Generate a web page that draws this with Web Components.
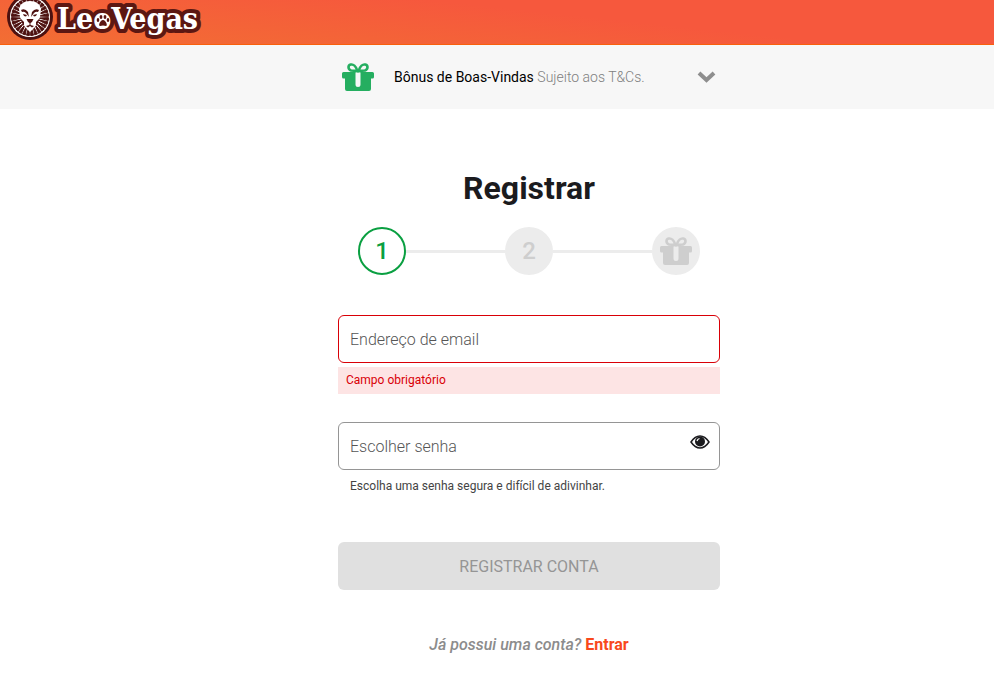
<!DOCTYPE html>
<html lang="pt-BR">
<head>
<meta charset="utf-8">
<meta name="viewport" content="width=device-width, initial-scale=1">
<title>Registrar</title>
<style>
  body {
    margin: 0;
    background: #fff;
    color: #1b1b1e;
    font-family: Roboto, sans-serif;
    --gutter: 64px;
    --column: 382px;
  }
</style>
</head>
<body>
<lv-header></lv-header>
<lv-offer>Bônus de Boas-Vindas<span slot="terms">Sujeito aos T&amp;Cs.</span></lv-offer>
<lv-signup></lv-signup>

<script>
function define(name, html, setup) {
  const template = document.createElement("template");
  template.innerHTML = html.trim();

  window.customElements.define(name, class extends HTMLElement {
    constructor() {
      super();
      this.attachShadow({mode: "open"})
        .appendChild(template.content.cloneNode(true));
    }
    connectedCallback() {
      if (setup) setup(this, this.shadowRoot);
    }
  });
}

// Dark wedges around the lion's face
function mane() {
  let d = "";
  const point = (r, a) => `${(30 + r * Math.cos(a)).toFixed(1)} ${(17 + r * Math.sin(a)).toFixed(1)}`;
  for (let i = 0; i < 28; i++) {
    const a = (i + .5) / 28 * Math.PI * 2;
    d += `M${point(9, a)}L${point(18.5, a - .08)}L${point(18.5, a + .08)}Z`;
  }
  return d;
}

define("lv-gift", `
<style>
  :host { display: block; width: 32px; height: 30px; }
  svg { display: block; width: 100%; height: 100%; }
</style>
<svg viewBox="0 0 32 30" aria-hidden="true">
  <g fill="none" stroke="currentColor" stroke-width="2.6">
    <path d="M15.5 9C14 4 11 2 8.700 2.600C5.500 3.400 6 7.500 9 8.500Z"/>
    <path d="M16.500 9C18 4 21 2 23.300 2.600C26.500 3.400 26 7.500 23 8.500Z"/>
  </g>
  <path fill="currentColor" fill-rule="evenodd" d="M1.500 10H12.500Q13 8 16 8Q19 8 19.500 10H30.500Q32 10 32 11.500V15Q32 16.500 30.500 16.500H29V27Q29 29 27 29H5Q3 29 3 27V16.500H1.500Q0 16.500 0 15V11.500Q0 10 1.500 10ZM13.500 10.500V22.500A2.500 2.500 0 0 0 18.500 22.500V10.500Q16 9 13.500 10.500Z"/>
</svg>
`);

define("lv-header", `
<style>
  :host {
    display: block;
    height: 44px;
    overflow: hidden;
    border-bottom: 1px solid #f9600c;
    background: linear-gradient(6deg, #f26e33, #f6583d 60%);
  }
  a { display: inline-block; }
  svg { display: block; }
  text {
    font-family: "DejaVu Serif Condensed", "DejaVu Serif", serif;
    font-weight: bold;
    font-size: 30px;
  }
</style>
<a href="#" aria-label="LeoVegas">
  <svg width="210" height="44" viewBox="0 0 210 44">
    <circle cx="30" cy="17" r="23" fill="#4d1110"/>
    <circle cx="30" cy="17" r="20" fill="#fff"/>
    <path d="${mane()}" fill="#4d1110" stroke="#4d1110" stroke-width="1"/>
    <path d="M30 1C24 1 20 4 19 9L20 17L22 23L26 28L30 32L34 28L38 23L40 17L41 9C40 4 36 1 30 1Z" fill="#fff"/>
    <g fill="#4d1110">
      <path d="M21 10Q25 8 28 12L29 17L26 13Q24 11 22 12ZM39 10Q35 8 32 12L31 17L34 13Q36 11 38 12Z"/>
      <path d="M23 14L27 15L26 16.500L24 16ZM37 14L33 15L34 16.500L36 16Z"/>
      <path d="M26.500 19H33.500L32 22L30.500 23V25L34 26L32 27.500L30 26L28 27.500L26 26L29.500 25V23L28 22Z"/>
      <path d="M20 18L24 22L24 26L22 23ZM40 18L36 22L36 26L38 23Z"/>
    </g>
    <text x="57" y="29" fill="#fff" stroke="#5c1712" stroke-width="8" stroke-linejoin="round" paint-order="stroke">LeoVegas</text>
    <circle cx="103" cy="21" r="7" fill="#fff"/>
    <g fill="#5c1712">
      <ellipse cx="98" cy="20" rx="1.300" ry="2"/>
      <ellipse cx="101" cy="17" rx="1.400" ry="2"/>
      <ellipse cx="105" cy="17" rx="1.400" ry="2"/>
      <ellipse cx="108" cy="20" rx="1.300" ry="2"/>
      <path d="M103 20C100 20 98 26 100 26Q103 25 106 26C108 26 106 20 103 20Z"/>
    </g>
  </svg>
</a>
`);

define("lv-offer", `
<style>
  :host {
    display: flex;
    justify-content: center;
    padding-left: var(--gutter);
    background: #f7f7f7;
  }
  button {
    display: flex;
    align-items: center;
    box-sizing: border-box;
    width: 100%;
    max-width: var(--column);
    height: 64px;
    padding: 0 4px;
    border: 0;
    background: none;
    color: #000;
    font: 14px/20px Roboto, sans-serif;
    text-align: left;
    cursor: pointer;
  }
  lv-gift { color: #25ae60; margin-right: 20px; }
  .text { flex: 1; }
  .terms { color: #808080; font-weight: 300; }
</style>
<button type="button" aria-expanded="false">
  <lv-gift></lv-gift>
  <span class="text"><slot></slot> <span class="terms"><slot name="terms"></slot></span></span>
  <svg width="19" height="12" viewBox="0 0 19 12" aria-hidden="true">
    <path d="M2 2L9.500 9L17 2" fill="none" stroke="#8e8e8e" stroke-width="4"/>
  </svg>
</button>
`, (host, root) => {
  const button = root.querySelector("button");
  button.onclick = () => {
    button.setAttribute("aria-expanded", button.getAttribute("aria-expanded") !== "true");
  };
});

define("lv-step", `
<style>
  :host {
    display: grid;
    place-items: center;
    box-sizing: border-box;
    width: 48px;
    height: 48px;
    border-radius: 50%;
    background: #ececec;
    color: #cecece;
    font-size: 24px;
    font-weight: 500;
  }
  :host([current]) {
    border: 2px solid #0a9f41;
    background: #fff;
    color: #0a9f41;
  }
</style>
<slot></slot>
`);

define("lv-steps", `
<style>
  :host { display: flex; align-items: center; padding: 0 20px; }
  i { flex: 1; height: 3px; background: #ececec; }
</style>
<lv-step current>1</lv-step>
<i></i>
<lv-step>2</lv-step>
<i></i>
<lv-step><lv-gift></lv-gift></lv-step>
`);

define("lv-field", `
<style>
  :host { display: block; }
  .box {
    display: grid;
    grid-template-columns: 1fr auto;
    align-items: center;
    box-sizing: border-box;
    height: 48px;
    border: 1px solid #959595;
    border-radius: 6px;
    background: #fff;
  }
  :host([invalid]) .box { border-color: #d90007; }
  label, input { grid-row: 1; grid-column: 1; }
  label {
    padding-left: 11px;
    color: #555;
    font-size: 16px;
    font-weight: 300;
    z-index: 1;
    pointer-events: none;
  }
  input {
    box-sizing: border-box;
    width: 100%;
    height: 46px;
    padding: 0 11px;
    border: 0;
    border-radius: 6px;
    outline: 0;
    background: none;
    font: 16px Roboto, sans-serif;
  }
  .filled label { visibility: hidden; }
  .note { display: block; font-size: 12px; }
  ::slotted([slot="note"]) { display: block; padding: 8px 12px 0; line-height: 16px; color: #444; }
  :host([invalid]) ::slotted([slot="note"]) {
    margin-top: 4px;
    padding: 5px 8px 6px;
    background: #fde4e4;
    color: #d90007;
  }
</style>
<div class="box">
  <label for="input"></label>
  <input id="input">
  <slot name="action"></slot>
</div>
<div class="note"><slot name="note"></slot></div>
`, (host, root) => {
  const input = root.querySelector("input");
  root.querySelector("label").textContent = host.getAttribute("label");
  input.type = host.getAttribute("type");
  input.oninput = () => input.parentNode.classList.toggle("filled", input.value !== "");
  host.addEventListener("reveal", () => {
    input.type = input.type === "password" ? "text" : "password";
  });
});

define("lv-reveal", `
<style>
  :host { display: block; }
  button {
    display: block;
    padding: 0 9px 8px;
    border: 0;
    background: none;
    cursor: pointer;
  }
  svg { display: block; }
</style>
<button type="button" aria-label="Mostrar senha">
  <svg width="20" height="14" viewBox="0 0 20 14" aria-hidden="true">
    <path d="M1 7Q5 1 10 1T19 7Q15 13 10 13T1 7Z" fill="#fff" stroke="#1b1b1e" stroke-width="1.500"/>
    <circle cx="10" cy="6.500" r="5" fill="#1b1b1e"/>
    <path d="M7 6Q7.500 4 9.500 3.500" fill="none" stroke="#fff" stroke-width="1.200"/>
  </svg>
</button>
`, (host, root) => {
  root.querySelector("button").onclick = () => host.dispatchEvent(new Event("reveal", {bubbles: true}));
});

define("lv-signup", `
<style>
  :host {
    display: flex;
    justify-content: center;
    padding: 60px 0 20px var(--gutter);
  }
  main { width: 100%; max-width: var(--column); }
  h1 {
    margin: 0 0 20px;
    font-size: 32px;
    font-weight: 700;
    line-height: 38px;
    text-align: center;
  }
  form { margin: 40px 0 0; }
  lv-field + lv-field { margin-top: 28px; }
  .submit {
    display: block;
    width: 100%;
    height: 48px;
    margin-top: 48px;
    border: 0;
    border-radius: 6px;
    background: #e0e0e0;
    color: #959595;
    font: 16px Roboto, sans-serif;
    text-transform: uppercase;
  }
  p {
    margin: 44px 0 0;
    color: #8c8c8c;
    font-size: 16px;
    font-weight: 500;
    line-height: 22px;
    text-align: center;
  }
  a { color: #f8481c; font-weight: 700; text-decoration: none; }
</style>
<main>
  <h1>Registrar</h1>
  <lv-steps></lv-steps>
  <form>
    <lv-field label="Endereço de email" type="email" invalid>
      <span slot="note">Campo obrigatório</span>
    </lv-field>
    <lv-field label="Escolher senha" type="password">
      <lv-reveal slot="action"></lv-reveal>
      <span slot="note">Escolha uma senha segura e difícil de adivinhar.</span>
    </lv-field>
    <button class="submit" disabled>Registrar conta</button>
  </form>
  <p><em>Já possui uma conta?</em> <a href="#">Entrar</a></p>
</main>
`);
</script>
</body>
</html>
